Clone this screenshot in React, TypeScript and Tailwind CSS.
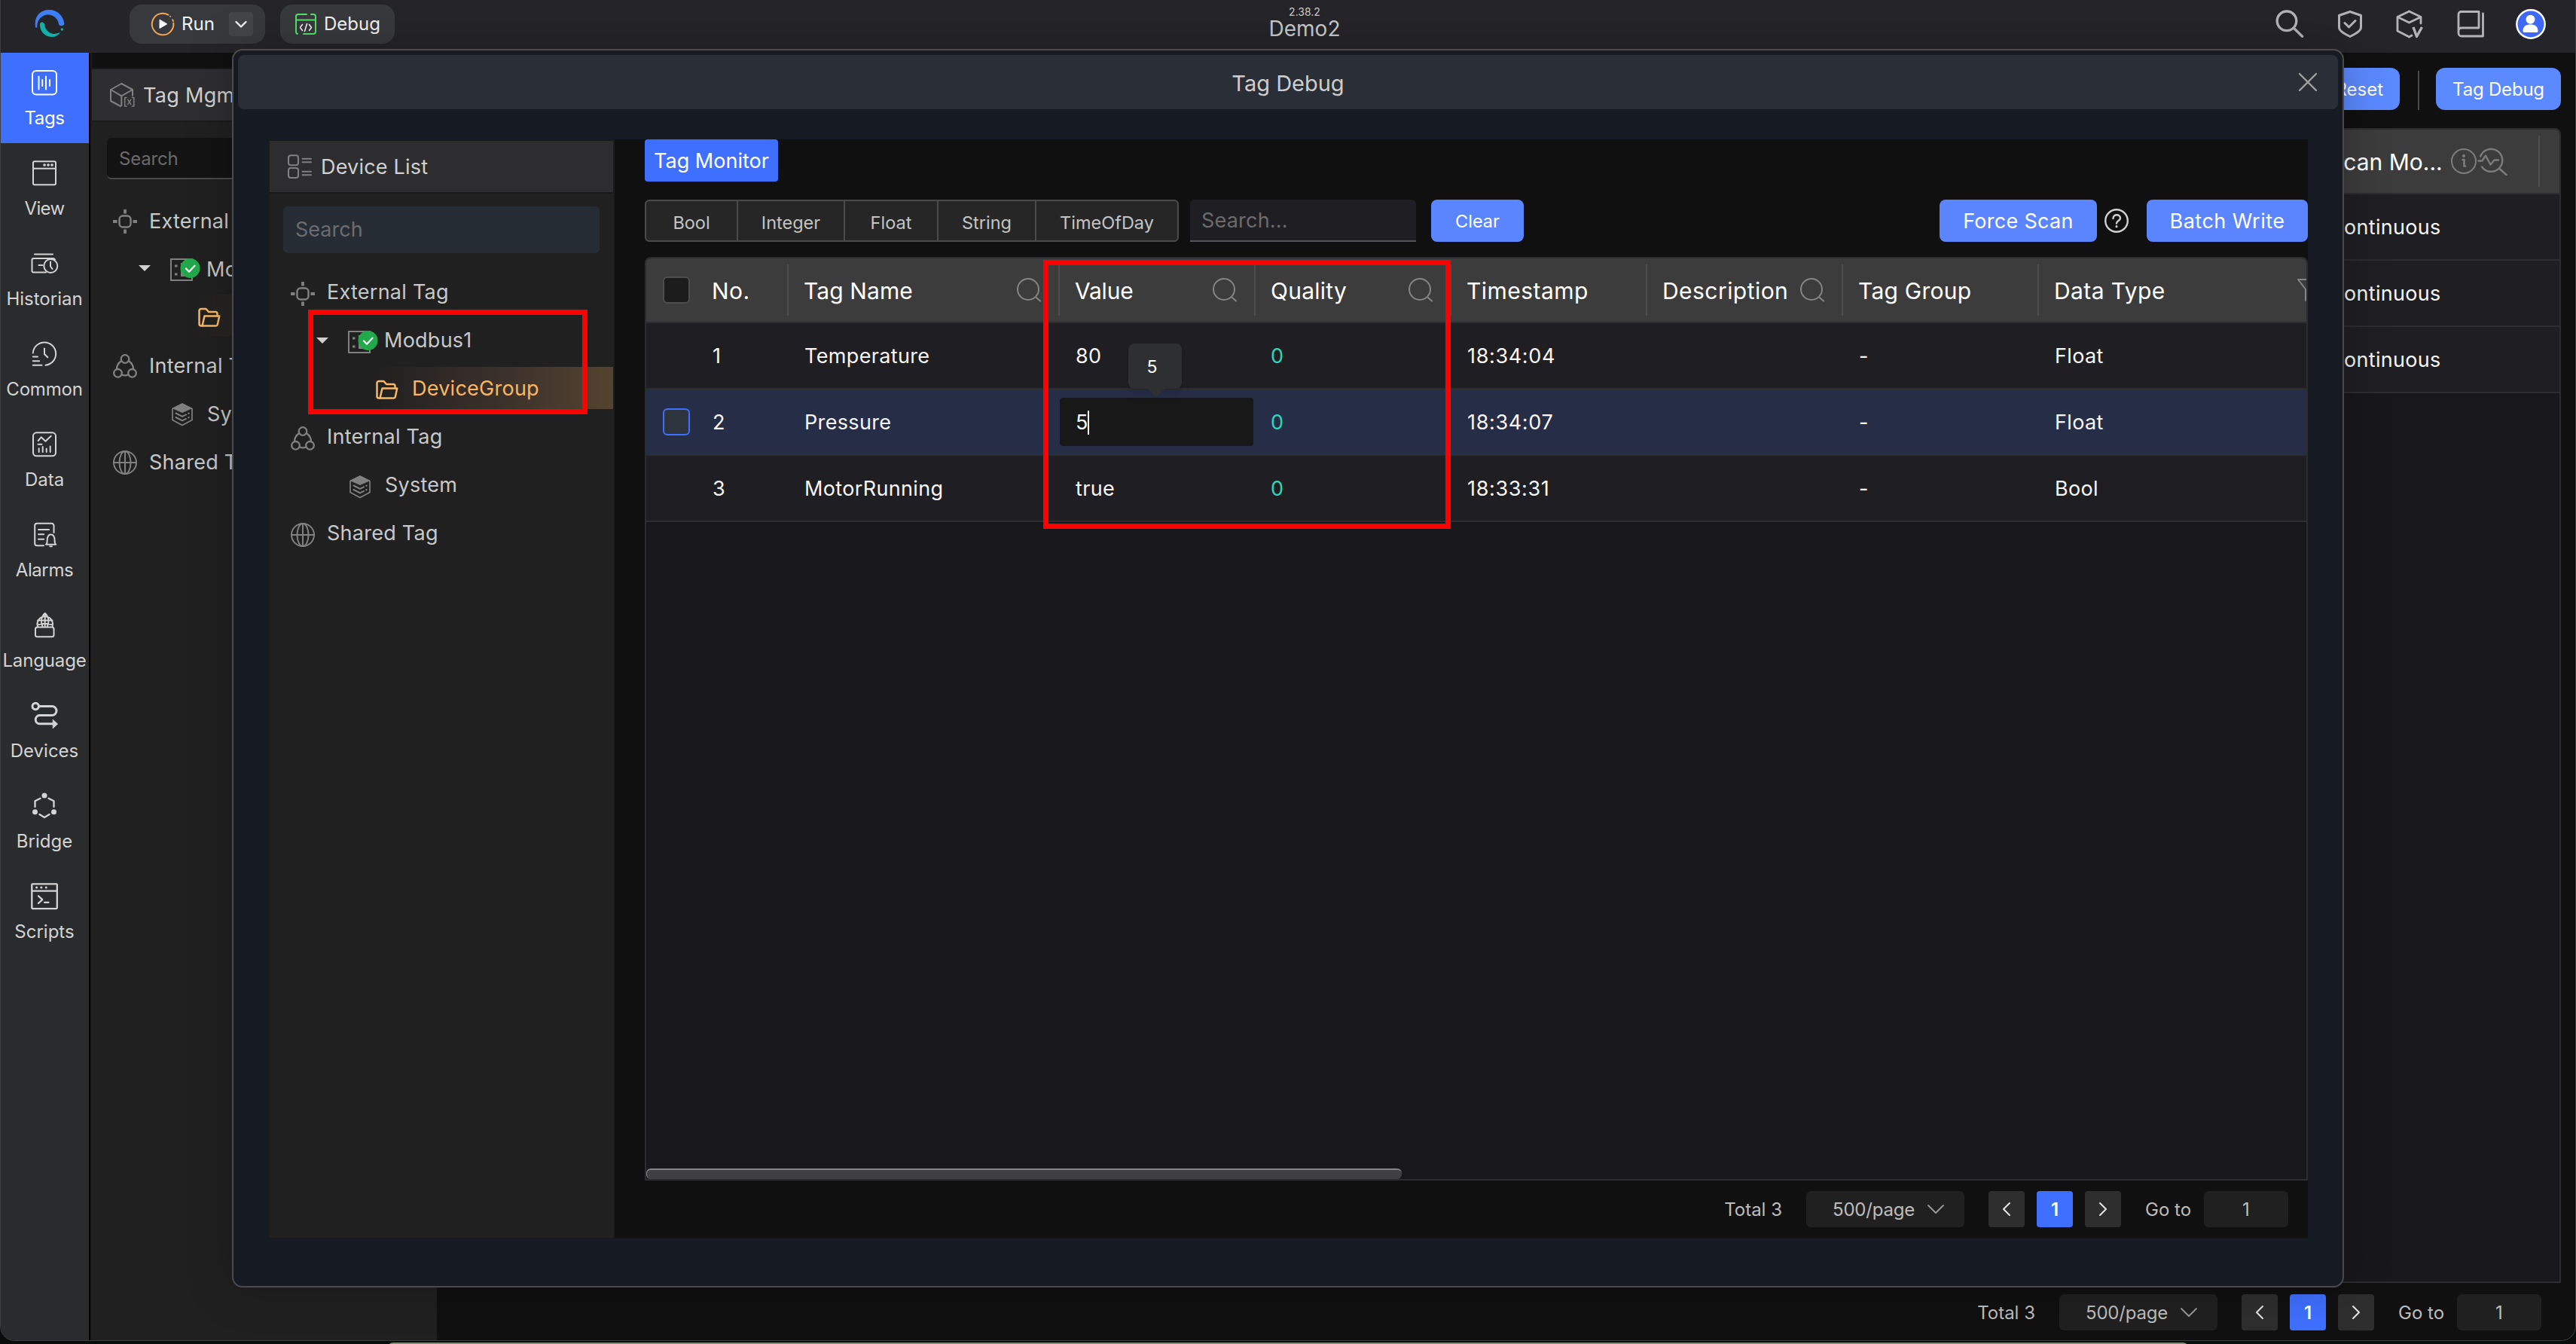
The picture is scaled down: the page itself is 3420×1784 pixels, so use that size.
import type { ReactNode } from "react";

type IconProps = { className?: string };

function Svg({ size = 34, className = "", sw = 2, children }: { size?: number; className?: string; sw?: number; children: ReactNode }) {
  return (
    <svg
      width={size}
      height={size}
      viewBox={`0 0 ${size} ${size}`}
      fill="none"
      stroke="currentColor"
      strokeWidth={sw}
      strokeLinecap="round"
      strokeLinejoin="round"
      className={`shrink-0 overflow-visible ${className}`}
    >
      {children}
    </svg>
  );
}

/* ---------- navigation icons ---------- */

const TagsIcon = () => (
  <Svg>
    <rect x="1" y="1" width="32" height="31.5" rx="5" />
    <path d="M9.5 8.5v17M14.2 13v8M19 8.5v17M24 13v8" />
  </Svg>
);
const ViewIcon = () => (
  <Svg>
    <rect x="2" y="1.3" width="30" height="31" rx="2" />
    <path d="M2 10.7h30" strokeLinecap="butt" />
    <path d="M17 6h.1M22 6h.1M27 6h.1" strokeWidth="3.6" />
  </Svg>
);
const HistorianIcon = () => (
  <Svg>
    <path d="M4 4.5h24M31 11.5a3 3 0 0 0-3-1.5H2.500a2 2 0 0 0-2 2v14.500a2 2 0 0 0 2 2H19M9.500 19h5" />
    <circle cx="25.3" cy="20" r="9" />
    <path d="M25 14.500v6l2.500 3.500" />
  </Svg>
);
const CommonIcon = () => (
  <Svg>
    <path d="M1.800 15.500A15.200 15.200 0 1 1 18.500 31.700" />
    <path d="M17 9.500v7.500l4.300 4.300M1.800 20.500h6.200M1.800 26.200h8.400M1.800 31.700h11.700" />
  </Svg>
);
const DataIcon = () => (
  <Svg>
    <rect x="2" y="1.300" width="30" height="31" rx="4.500" />
    <path d="M8.700 12l4-4.700 5.700 5.400 7.300-7M8.500 16.700h5M9.700 27v-4.700M14.700 27v-7M19.700 27v-4.400M24.700 27v-7.400" />
  </Svg>
);
const AlarmsIcon = () => (
  <Svg>
    <path d="M29.500 14V4.800a3 3 0 0 0-3-3H7.200a3 3 0 0 0-3 3v23.400a3 3 0 0 0 3 3H16M9 10h14M9 16.300h7.200M9 22.700h7.200" />
    <path d="M19 29.800h13.300c-1.400-.8-1.700-2.300-1.700-4.800 0-5-1.800-8.500-5-8.500s-5 3.500-5 8.500c0 2.500-.3 4-1.600 4.800zM24.300 32.200h2.600" />
  </Svg>
);
const LanguageIcon = () => (
  <Svg>
    <path d="M8 18.500a10.200 10.200 0 1 1 19.500 0M8 10.500h19.500M17.700 1v18M14.500 18.500c-2.500-6-2-13 3.200-17.500 5.200 4.500 5.700 11.500 3.200 17.500M9.500 16c5-1.500 11.500-1.500 16.500 0" />
    <rect x="5" y="19.500" width="24.500" height="12.800" rx="2.500" />
  </Svg>
);
const DevicesIcon = () => (
  <Svg sw={3}>
    <circle cx="5.200" cy="4.500" r="4.200" />
    <path d="M10 4.500h17a6 6 0 0 1 0 12H10.200a5.700 5.700 0 0 0 0 11.300H28" />
    <path d="M28.500 22.500l6 5.500-6 5.500z" fill="currentColor" strokeWidth="1" />
  </Svg>
);
const BridgeIcon = () => (
  <Svg sw={2.300}>
    <g fill="currentColor" stroke="none">
      <circle cx="17" cy="3" r="3.500" />
      <circle cx="4.500" cy="24.700" r="3.500" />
      <circle cx="29.500" cy="24.700" r="3.500" />
    </g>
    <path d="M11.500 6.800l-7 3.500V18M22.500 6.800l7 3.500V18M10.500 28l6.500 4 6.500-4" />
  </Svg>
);
const ScriptsIcon = () => (
  <Svg sw={2.300}>
    <rect x="0.300" y="0.300" width="33.500" height="32.800" rx="1" />
    <path d="M.3 9.600h33.500" strokeLinecap="butt" />
    <path d="M6.600 5h.1M12.800 5h.1M19.200 5h.1" strokeWidth="3" />
    <path d="M9 16.300l5.300 4.800L9 26M17 24.800h5.500" />
  </Svg>
);

/* ---------- tree icons ---------- */

const CubeVarIcon = ({ className }: IconProps) => (
  <Svg size={32} className={className}>
    <path d="M14 31L1 24V9L15.300 1 30 9v8M1 9l14.300 8.300L30 9M15.300 17.300V30" />
    <path d="M22 19.500h-2.300v11.500H22M29.500 19.500h2.300v11.500h-2.300M23.800 22.300l4 6M27.800 22.300l-4 6" strokeWidth="1.500" />
  </Svg>
);
const DeviceListIcon = () => (
  <Svg size={32}>
    <rect x="1" y="1.300" width="13" height="13" rx="3" />
    <rect x="1" y="18" width="13" height="13" rx="3" />
    <path d="M19.500 5.700H31M19.500 10.300H31M19.500 22.700H31M19.500 27.300H31" />
  </Svg>
);
const ExternalIcon = () => (
  <Svg size={32} sw={2.400}>
    <rect x="8.500" y="8.500" width="15" height="15" rx="4.500" />
    <path d="M16 0v5.500M16 26.500V32M0 16h5.500M26.500 16H32" strokeWidth="3.800" strokeLinecap="butt" />
  </Svg>
);
const InternalIcon = () => (
  <Svg size={32} sw={2.300}>
    <circle cx="16" cy="6.500" r="5.300" />
    <circle cx="6.500" cy="25.300" r="5.300" />
    <circle cx="25.500" cy="25.300" r="5.300" />
    <path d="M11 9C7 12 5 16 5 20M21 9c4 3 6 7 6 11M12 27.500c2.500 1 5.500 1 8 0" />
  </Svg>
);
const GlobeIcon = () => (
  <Svg size={32}>
    <circle cx="16" cy="16" r="15" />
    <ellipse cx="16" cy="16" rx="7.500" ry="15" />
    <path d="M16 1v30M1 16h30" />
  </Svg>
);
const SystemIcon = () => (
  <Svg size={30} sw={1.700}>
    <path d="M15 1l13 6.500v15L15 29.500l-13-7v-15z" />
    <path d="M15 1l12.500 6.300L15 12.800 2.500 7.300z" fill="currentColor" strokeWidth="0.500" />
    <path d="M6.500 13.500l8.500 4.300 5-2.400M6.500 19l8.500 4.300 5-2.400" strokeWidth="2" />
    <path d="M23.300 13.800l.4-.2M23.300 19.300l.4-.2" strokeWidth="2.200" />
  </Svg>
);
const FolderIcon = () => (
  <Svg size={30} sw={2.500}>
    <path d="M5 25.500H4a2.500 2.500 0 0 1-2.500-2.500V5.500A2.500 2.500 0 0 1 4 3h6.500l3.500 4h9a2.500 2.500 0 0 1 2.500 2.500V12" />
    <path d="M8.500 12.500H28.200l-2.400 11.300a2.200 2.200 0 0 1-2.200 1.700H5.500z" />
  </Svg>
);
const ModbusIcon = () => (
  <Svg size={44}>
    <g strokeLinejoin="miter">
      <rect x="1" y="8" width="28" height="28" />
      <rect x="14" y="13" width="11" height="7" fill="currentColor" stroke="none" />
      <rect x="14" y="23" width="11" height="8" fill="currentColor" stroke="none" />
    </g>
    <path d="M6 17h3.500M6 28h3.500" strokeWidth="3" strokeLinecap="butt" />
    <circle cx="26.500" cy="20" r="13" fill="#21a94b" stroke="none" />
    <path d="M21 20.500l4 4.200 7.500-8" stroke="#fff" strokeWidth="2.200" />
  </Svg>
);

const SearchGlyph = ({ className }: IconProps) => (
  <Svg size={32} className={className}>
    <circle cx="15" cy="15" r="14" />
    <path d="M26 26l5 4.500" />
  </Svg>
);
const FilterGlyph = ({ className }: IconProps) => (
  <Svg size={32} className={className}>
    <path d="M1 2h29L20 15v10l-9 5V15z" />
  </Svg>
);
const ChevronDown = ({ className }: IconProps) => (
  <Svg size={22} className={className} sw={1.800}>
    <path d="M1 6l10 10L21 6" />
  </Svg>
);

/* ---------- top bar ---------- */

function Logo() {
  return (
    <svg width="40" height="40" viewBox="0 0 40 40" className="shrink-0">
      <path d="M1.300 24.700C-2 10 8 .8 19.500 1 30 1 38 9 39.300 19c.2 4-6.300 4.500-7.300 1C31 12 24 7 17 7.500 8 8.500 3 15 3.300 24.700z" fill="#3f7ff5" />
      <path d="M7 20c0-3.500 5-3.500 6 0 .5 7 6 12.500 12 13 3 .2 6-1 9-2-4 5.500-8.500 6.300-12 6-9-.5-15.500-8-15-17z" fill="#12b0a6" />
      <circle cx="36.300" cy="27" r="1.700" fill="#12b0a6" />
    </svg>
  );
}

function TopBar() {
  return (
    <header className="flex h-[70px] shrink-0 items-start bg-[#252429] text-[24px] leading-8 text-[#f2f2f2]">
      <div className="flex w-[1631px] items-start pl-[45px]">
        <div className="pt-[12px]">
          <Logo />
        </div>
        <div className="mt-1.5 ml-[86px] flex h-[52px] w-[180px] items-center rounded-2xl bg-[#38393d] pl-[28px]">
          <Svg size={32} sw={2}>
            <path d="M30.300 14.500a14.300 14.300 0 1 1-7-10.800" stroke="#f6a653" />
            <path d="M26 5.800h.1M29.300 10.300l.6 1.700" stroke="#f6a653" />
            <path d="M12 10.500v11l9.500-5.500z" fill="#fff" stroke="#fff" strokeWidth="1" />
          </Svg>
          <span className="ml-[9px]">Run</span>
          <div className="ml-[19px] flex size-8 items-center justify-center rounded bg-[#444549]">
            <Svg size={16} sw={2.400}>
              <path d="M1.500 5L8 11.500 14.500 5" />
            </Svg>
          </div>
        </div>
        <div className="mt-1.5 ml-5 flex h-[52px] w-[152px] items-center rounded-2xl bg-[#38393d] pl-5">
          <Svg size={28} sw={2}>
            <g stroke="#52e067">
              <path d="M1 8.500V4a3 3 0 0 1 3-3h11M21 1h3a3 3 0 0 1 3 3v20a3 3 0 0 1-3 3H11M3 27a3 3 0 0 1-2-3V8.500M1 8.500h26" />
            </g>
            <path d="M9.500 14.500L6.500 18.500l3 4M18.500 14.500l3 4-3 4M15.500 13.500l-3 10" strokeWidth="1.600" />
          </Svg>
          <span className="ml-[10px]">Debug</span>
        </div>
      </div>
      <div className="flex w-[200px] flex-col items-center text-[#c9c9c9]">
        <span className="mt-2 text-[14px] leading-4">2.38.2</span>
        <span className="text-[28px] leading-7">Demo2</span>
      </div>
      <div className="mt-3 ml-auto flex gap-10 pr-[39px] text-[#b4b4b6]">
        <Svg size={40} sw={3.400}>
          <circle cx="16" cy="15.800" r="12.800" />
          <path d="M25.500 25.500l11 10.700" />
        </Svg>
        <Svg size={40} sw={3}>
          <path d="M20 3.500l14.500 5v16c0 4.500-8 9-14.500 12-6.500-3-14.500-7.500-14.500-12v-16z" />
          <path d="M13 18.500l5.500 5.500 8.500-8.500" />
        </Svg>
        <Svg size={40} sw={2.800}>
          <path d="M22 35l-3.500 2L3 29V10.500L18.500 3 34 10.500V19M3 10.500L18.500 18 34 10.500" />
          <path d="M24 24l4.500 12.500L35.500 24" strokeWidth="3.400" strokeLinecap="butt" />
        </Svg>
        <Svg size={40} sw={2.800}>
          <path d="M4 32V7a3.500 3.500 0 0 1 3.500-3.500H31V25H8a4 4 0 0 0-4 3.500v3.500a4 4 0 0 0 4 4h28.500V6" />
        </Svg>
        <Svg size={40} sw={2.400}>
          <circle cx="20" cy="20" r="18.700" fill="#3e68f8" stroke="#fff" />
          <g fill="#fff" stroke="none">
            <circle cx="19.500" cy="13.800" r="6" />
            <path d="M9.500 29c0-6 4-8.500 10-8.500s10 2.500 10 8.500c0 1.500-.8 2-2 2h-16c-1.200 0-2-.5-2-2z" />
          </g>
        </Svg>
      </div>
    </header>
  );
}

/* ---------- side navigation ---------- */

const NAV: { label: string; icon: ReactNode; tracking: string }[] = [
  { label: "Tags", icon: <TagsIcon />, tracking: "tracking-[-0.400px]" },
  { label: "View", icon: <ViewIcon />, tracking: "tracking-[-0.700px]" },
  { label: "Historian", icon: <HistorianIcon />, tracking: "" },
  { label: "Common", icon: <CommonIcon />, tracking: "tracking-[-0.200px]" },
  { label: "Data", icon: <DataIcon />, tracking: "" },
  { label: "Alarms", icon: <AlarmsIcon />, tracking: "tracking-[-0.400px]" },
  { label: "Language", icon: <LanguageIcon />, tracking: "tracking-[-0.150px]" },
  { label: "Devices", icon: <DevicesIcon />, tracking: "" },
  { label: "Bridge", icon: <BridgeIcon />, tracking: "" },
  { label: "Scripts", icon: <ScriptsIcon />, tracking: "" },
];

function SideNav() {
  return (
    <nav className="flex w-[120px] shrink-0 flex-col border-r-2 border-black bg-[#2a2b2d] text-[24px] leading-[30px] text-[#d4d4d4]">
      {NAV.map((n, i) => (
        <div key={n.label} className={`flex h-[120px] flex-col items-center gap-[15px] pt-[23px] ${i === 0 ? "bg-[#3f6fff] text-white" : ""}`}>
          {n.icon}
          <span className={n.tracking}>{n.label}</span>
        </div>
      ))}
    </nav>
  );
}

/* ---------- tag tree ---------- */

function TreeRow({ icon, label, indent, lower, active, arrow }: { icon: ReactNode; label: string; indent: string; lower?: boolean; active?: boolean; arrow?: boolean }) {
  return (
    <div
      className={`flex h-14 items-center whitespace-nowrap ${indent} ${
        active
          ? "bg-[linear-gradient(90deg,transparent_30%,#3a302a_66%,#54432f_100%)] text-[#f9b764]"
          : "text-[#c8c8c8]"
      }`}
    >
      {arrow && <div className="mt-0.5 mr-[26px] h-0 w-0 border-x-8 border-t-8 border-x-transparent border-t-[#d0d0d0]" />}
      <div className={`mr-4 flex w-8 pt-1.5 ${active ? "text-[#f9b764]" : "text-[#808080]"}`}>{icon}</div>
      <span className={`text-[27px] leading-8 tracking-[0.250px] ${lower ? "pt-[5px]" : "pt-px"}`}>{label}</span>
    </div>
  );
}

function Tree({ lower }: { lower?: boolean }) {
  return (
    <div className="flex flex-col gap-2">
      <TreeRow lower={lower} indent="pl-7" icon={<ExternalIcon />} label="External Tag" />
      <TreeRow lower={lower} indent="pl-[62px]" icon={<ModbusIcon />} label="Modbus1" arrow />
      <TreeRow lower={lower} indent="pl-[141px]" icon={<FolderIcon />} label="DeviceGroup" active />
      <TreeRow lower={lower} indent="pl-7" icon={<InternalIcon />} label="Internal Tag" />
      <TreeRow lower={lower} indent="pl-[105px]" icon={<SystemIcon />} label="System" />
      <TreeRow lower={lower} indent="pl-7" icon={<GlobeIcon />} label="Shared Tag" />
    </div>
  );
}

/* ---------- pagination ---------- */

function Pagination() {
  return (
    <div className="flex h-12 items-center justify-end pr-[26px] text-[24px] leading-8 text-[#bdbdbd]">
      <span className="mr-8 pt-0.5">Total 3</span>
      <div className="mr-8 flex h-12 w-[210px] items-center rounded-md bg-[#202021] pl-[35px]">
        <span className="pt-0.5 tracking-[-0.200px]">500/page</span>
        <ChevronDown className="ml-[17px] text-[#9a9a9a]" />
      </div>
      <div className="flex gap-4 text-[#e6e6e6]">
        <div className="flex size-12 items-center justify-center rounded bg-[#2e2e2f]">
          <Svg size={20}>
            <path d="M14 2L6 10l8 8" />
          </Svg>
        </div>
        <div className="flex size-12 items-center justify-center rounded bg-[#3f6fff] pt-0.5 font-semibold text-white">1</div>
        <div className="flex size-12 items-center justify-center rounded bg-[#2e2e2f]">
          <Svg size={20}>
            <path d="M6 2l8 8-8 8" />
          </Svg>
        </div>
      </div>
      <span className="mr-4 ml-8 w-[62px] pt-0.5">Go to</span>
      <div className="flex h-12 w-28 items-center justify-center rounded-md bg-[#202021] pt-0.5">1</div>
    </div>
  );
}

/* ---------- data table ---------- */

type Column = { label: string; width: string; glyph?: ReactNode; tracking: string };

const COLUMNS: Column[] = [
  { label: "Tag Name", width: "w-[360px]", glyph: <SearchGlyph />, tracking: "tracking-[0.100px]" },
  { label: "Value", width: "w-[260px]", glyph: <SearchGlyph />, tracking: "tracking-[-0.200px]" },
  { label: "Quality", width: "w-[260px]", glyph: <SearchGlyph />, tracking: "tracking-[0.250px]" },
  { label: "Timestamp", width: "w-[260px]", tracking: "tracking-[0.450px]" },
  { label: "Description", width: "w-[260px]", glyph: <SearchGlyph />, tracking: "tracking-[0.450px]" },
  { label: "Tag Group", width: "w-[260px]", tracking: "tracking-[0.250px]" },
  { label: "Data Type", width: "w-[400px]", glyph: <FilterGlyph />, tracking: "tracking-[0.400px]" },
];

const ROWS = [
  { no: 1, name: "Temperature", value: "80", time: "18:34:04", type: "Float" },
  { no: 2, name: "Pressure", value: "5", time: "18:34:07", type: "Float" },
  { no: 3, name: "MotorRunning", value: "true", time: "18:33:31", type: "Bool" },
];

function MonitorTable() {
  return (
    <div className="flex h-[1226px] flex-col overflow-hidden rounded-t-lg border-2 border-[#2d2d30] bg-[#18171c]">
      <div className="flex h-[86px] shrink-0 border-b-2 border-[#2d2d30] bg-[#3c3c3c] text-[30px] leading-9 text-white">
        <div className="flex w-[189px] shrink-0 items-center pl-[22px]">
          <div className="size-9 rounded-md border-2 border-[#4d4d4d] bg-[#1c1c1c]" />
          <span className="ml-[29px] pt-0.5 tracking-[0.500px]">No.</span>
          <div className="ml-auto h-[68px] w-0.5 bg-[#4e4e4e]" />
        </div>
        {COLUMNS.map((c) => (
          <div key={c.label} className={`flex shrink-0 items-center pl-5 ${c.width}`}>
            <span className={`pt-0.5 ${c.tracking}`}>{c.label}</span>
            <div className="mr-[23px] ml-auto text-[#858585]">{c.glyph}</div>
            <div className="h-[68px] w-0.5 bg-[#4e4e4e]" />
          </div>
        ))}
      </div>
      {ROWS.map((r) => {
        const hover = r.no === 2;
        return (
          <div
            key={r.no}
            className={`flex h-[88px] shrink-0 items-stretch border-b-2 border-[#2d2d30] text-[27px] leading-8 text-[#f6f6f6] ${hover ? "bg-[#262d47]" : "bg-[#1f1e23]"}`}
          >
            <div className="flex w-[189px] shrink-0 items-center pl-[22px]">
              <div className={`size-9 rounded-md border-2 ${hover ? "border-[#3f6fff] bg-[#2d343e]" : "border-transparent"}`} />
              <span className="ml-[30px] pt-0.5">{r.no}</span>
            </div>
            <div className="flex w-[360px] shrink-0 items-center pt-0.5 pl-[21px] tracking-[0.350px]">{r.name}</div>
            <div className="flex w-[260px] shrink-0 items-center">
              <div className={`flex h-16 w-[257px] items-center rounded pt-0.5 pl-[21px] tracking-[0.350px] ${hover ? "bg-[#181818]" : ""}`}>
                {r.value}
                {hover && <div className="-ml-px h-8 w-0.5 bg-white" />}
              </div>
            </div>
            <div className="flex w-[260px] shrink-0 items-center pt-0.5 pl-5 text-[#2bd8b9]">0</div>
            <div className="flex w-[260px] shrink-0 items-center pt-0.5 pl-[21px] tracking-[0.650px]">{r.time}</div>
            <div className="w-[260px] shrink-0" />
            <div className="flex w-[260px] shrink-0 items-center pt-0.5 pl-[21px]">-</div>
            <div className="flex w-[400px] shrink-0 items-center pt-0.5 pl-[21px] tracking-[0.350px]">{r.type}</div>
          </div>
        );
      })}
      <div className="mt-auto h-[14px] w-[1003px] rounded-md border-t-2 border-l border-[#858585] bg-[#3f3f41]" />
    </div>
  );
}

/* ---------- page behind the dialog ---------- */

function TagPage() {
  return (
    <div className="flex min-w-0 flex-1 flex-col bg-[#101010]">
      <div className="mt-5 mr-[19px] flex h-14 items-center justify-end text-[24px] leading-8 text-white">
        <div className="flex h-14 items-center rounded-xl bg-[#5b89ff] px-[22px] pt-0.5">Reset</div>
        <div className="mt-1 mr-[22px] ml-[24px] h-[52px] w-0.5 bg-[#4a4a4a]" />
        <div className="flex h-14 w-[166px] items-center justify-center rounded-xl bg-[#5b89ff] pt-0.5 tracking-[-0.200px]">Tag Debug</div>
      </div>
      <div className="mt-6 mr-[19px] flex h-[1533px] flex-col overflow-hidden rounded-t-lg border-2 border-[#2d2d30] bg-[#18171c]">
        <div className="flex h-[86px] shrink-0 items-center justify-end border-b-2 border-[#2d2d30] bg-[#3c3c3c] text-[30px] leading-9 text-white">
          <div className="flex w-[326px] items-center pl-5">
            <span className="pt-px">Scan Mo...</span>
            <div className="ml-[11px] flex text-[#7c7c7c]">
              <Svg size={38}>
                <circle cx="17" cy="19" r="16" />
                <path d="M17 12h.1" strokeWidth="4" />
                <path d="M15.500 17h2v8.500h1.500" strokeWidth="2.600" />
              </Svg>
              <Svg size={38} sw={2.400}>
                <path d="M1.200 12.500A15 15 0 1 1 3 26.500M26.500 29l9 8" />
                <path d="M-1.500 18.500h5l4.500-7 6.500 12 5-6h5.500" />
              </Svg>
            </div>
            <div className="mr-[26px] ml-auto h-[68px] w-0.5 shrink-0 bg-[#4e4e4e]" />
          </div>
        </div>
        {[0, 1, 2].map((i) => (
          <div key={i} className="flex h-[88px] shrink-0 items-center justify-end border-b-2 border-[#2d2d30] bg-[#1f1e23] text-[27px] leading-8 text-[#f6f6f6]">
            <div className="w-[326px] pt-0.5 pl-5 tracking-[0.300px]">Continuous</div>
          </div>
        ))}
      </div>
      <div className="mt-[15px] mr-[19px]">
        <Pagination />
      </div>
    </div>
  );
}

/* ---------- dialog ---------- */

function TagDebugDialog() {
  return (
    <section className="absolute top-[65px] left-[308px] flex h-[1644px] w-[2804px] flex-col rounded-[14px] border-2 border-[#4b4b4b] bg-[#161a22] p-1.5 shadow-[0_0_60px_rgba(0,0,0,0.25)]">
      <div className="relative flex h-[72px] shrink-0 items-center justify-center rounded-lg bg-[#2a2e36] text-[29px] leading-9 text-[#cdcdcd]">
        <span className="pt-[3px]">Tag Debug</span>
        <Svg size={24} sw={2.300} className="absolute right-7 text-[#a4a4a4]">
          <path d="M1 1l22 22M23 1L1 23" />
        </Svg>
      </div>
      <div className="mt-10 ml-10 flex h-[1458px] w-[2708px]">
        <aside className="flex w-[460px] shrink-0 flex-col border-x-2 border-[#1c1c1d] bg-[#202020]">
          <div className="flex h-[72px] shrink-0 items-center gap-3 border-y-2 border-[#1a1a1b] bg-[#2d2d2f] pl-6 text-[27px] leading-8 tracking-[0.200px] text-[#d0d0d0]">
            <div className="text-[#808080]">
              <DeviceListIcon />
            </div>
            <span className="pt-px">Device List</span>
          </div>
          <div className="mx-[18px] mt-[17px] mb-[23px] flex h-[62px] shrink-0 items-center rounded-md bg-[#252c34] pl-4 text-[27px] text-[#6a6c70]">
            Search
          </div>
          <Tree />
        </aside>
        <div className="flex min-w-0 flex-1 flex-col bg-[#101010] pl-10">
          <div className="flex h-14 w-[177px] shrink-0 items-center justify-center rounded bg-[#3f6fff] pt-0.5 text-[27px] text-white">Tag Monitor</div>
          <div className="mt-6 flex h-14 shrink-0 items-center text-[27px] leading-8">
            <div className="flex h-14 w-[709px] items-stretch rounded-md border-2 border-[#4a4a4a] bg-[#262626] text-[23.500px] text-[#c4c4c4] *:flex *:items-center *:justify-center *:border-[#4a4a4a] *:pt-1.5">
              <div className="w-[122px] border-r-2">Bool</div>
              <div className="w-[142px] border-r-2">Integer</div>
              <div className="w-[124px] border-r-2">Float</div>
              <div className="w-[130px] border-r-2">String</div>
              <div className="flex-1">TimeOfDay</div>
            </div>
            <div className="ml-[15px] flex h-14 w-[300px] items-center rounded-t-md border-b-2 border-[#55555a] bg-[#1f1f23] pt-0.5 pl-[15px] tracking-[0.200px] text-[#6b6b6b]">Search...</div>
            <div className="ml-5 flex h-14 w-[123px] items-center justify-center rounded-lg bg-[#5b84ff] pt-px text-[23.500px] text-white">Clear</div>
            <div className="ml-auto flex h-14 w-[209px] items-center justify-center rounded-lg bg-[#5b84ff] pt-px tracking-[0.300px] text-white">Force Scan</div>
            <Svg size={32} sw={2.400} className="mr-6 ml-[10px] text-[#d2d2d2]">
              <circle cx="16" cy="16" r="14.800" />
              <path d="M11.500 13c0-6.500 9.500-6 9.500-.5 0 3.500-5 3.500-5 7" />
              <path d="M16 23.500v.2" strokeWidth="3" />
            </Svg>
            <div className="flex h-14 w-[214px] items-center justify-center rounded-lg bg-[#5b84ff] pt-px tracking-[0.500px] text-white">Batch Write</div>
          </div>
          <div className="mt-5">
            <MonitorTable />
          </div>
          <div className="mt-[14px]">
            <Pagination />
          </div>
        </div>
      </div>
    </section>
  );
}

export default function App() {
  return (
    <div className="relative h-[1784px] w-[3420px] overflow-hidden bg-[#080c0a] font-['Inter',sans-serif]">
      <div className="mx-auto flex h-[1780px] flex-col overflow-hidden rounded-b-[20px] border-x border-b border-[#3e3f41] bg-[#101010]">
        <TopBar />
        <div className="-ml-px flex flex-1">
          <SideNav />
          <aside className="flex w-[460px] shrink-0 flex-col border-l-2 border-[#1c1c1d] bg-[#202020] shadow-[inset_0_20px_0_#101010]">
            <div className="mt-5 flex h-[72px] shrink-0 items-center gap-3 border-y-2 border-[#1a1a1b] bg-[#2e2e30] pl-6 text-[27px] leading-8 tracking-[0.300px] text-[#d0d0d0]">
              <CubeVarIcon className="text-[#808080]" />
              <span className="pt-0.5">Tag Mgmt</span>
            </div>
            <div className="mx-5 mt-[21px] mb-[25px] flex h-[55px] shrink-0 items-center rounded-md border-b-2 border-[#4a4a4a] bg-[#131313] pt-0.5 pl-4 text-[24px] tracking-[-0.200px] text-[#6a6a6a]">
              Search
            </div>
            <Tree lower />
          </aside>
          <TagPage />
        </div>
      </div>
      <div className="mx-auto mt-[2px] h-2 w-[2392px] rounded-t-lg bg-[#838c7a]" />

      <TagDebugDialog />

      <div className="absolute top-[456px] left-[1498px] flex h-[60px] w-[71px] items-center justify-center rounded-lg bg-[#2e2f31] pt-0.5 pr-2 text-[23px] text-white shadow-lg">
        5
        <div className="absolute top-[60px] left-[26px] border-x-[11px] border-t-[11px] border-x-transparent border-t-[#2e2f31]" />
      </div>
      <div className="absolute top-[411px] left-[409px] h-[139px] w-[371px] border-[7px] border-[#ff0000]" />
      <div className="absolute top-[345px] left-[1385px] h-[357px] w-[541px] border-[7px] border-[#ff0000]" />
    </div>
  );
}
